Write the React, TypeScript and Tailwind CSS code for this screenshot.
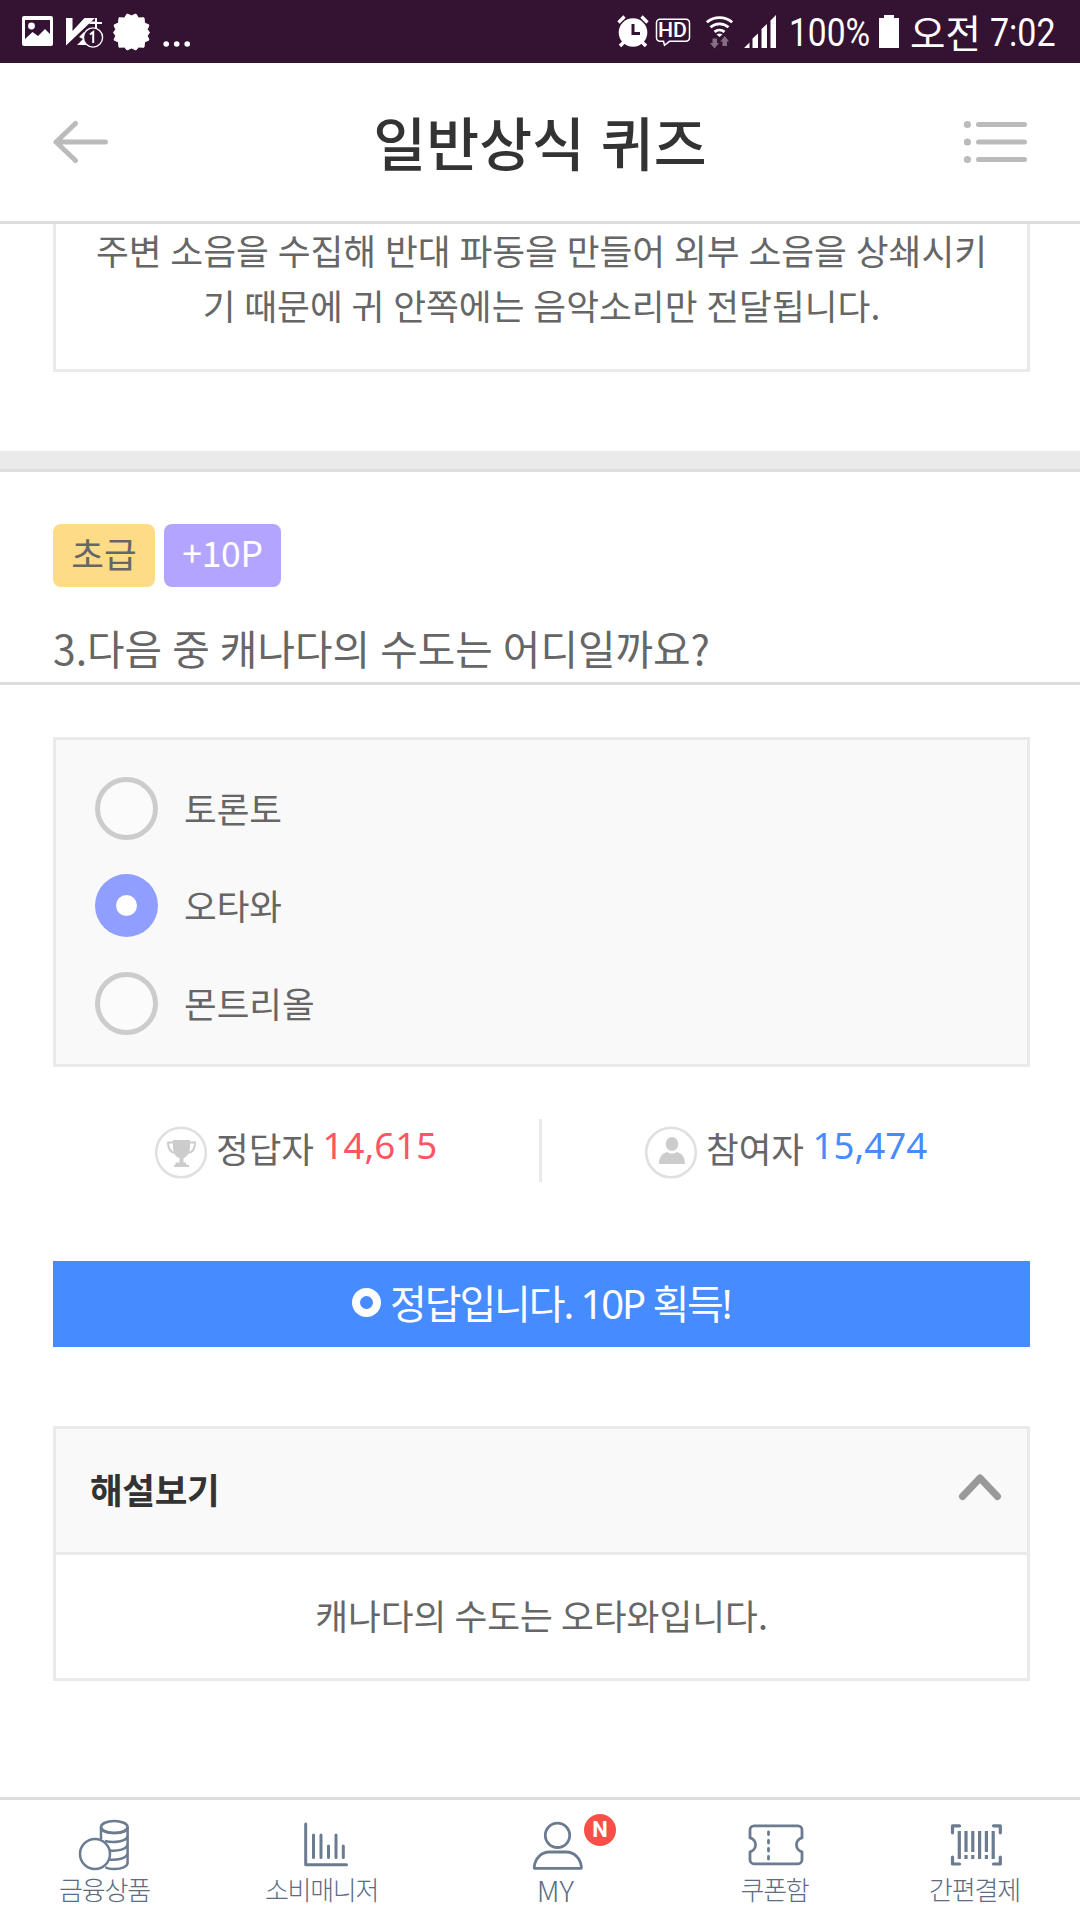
import React from "react";

const KR = "font-['Noto_Sans_CJK_KR',sans-serif]";
const LATIN = "font-['Noto_Sans','Noto_Sans_CJK_KR',sans-serif]";

function StatusBar() {
  return (
    <div className="flex h-[63px] shrink-0 items-start bg-[#341332] text-white">
      <svg className="mt-[13px] ml-[20px] h-[38px] w-[172px]" viewBox="20 13 172 38" fill="none">
        <path
          fill="#fff"
          fillRule="evenodd"
          d="M24 16h27a2 2 0 0 1 2 2v26a2 2 0 0 1-2 2H24a2 2 0 0 1-2-2V18a2 2 0 0 1 2-2Zm1 4v19l7.500-7 5.500 4 7-7 5 5V20Z"
        />
        <circle cx="31.500" cy="26" r="3.400" fill="#fff" />
        <path fill="#fff" d="M66 18h6.500v13L84.500 18H95L66 45.500Z" />
        <path fill="#fff" d="M91 21.500h4V18h2v4h5v2h-5v4h-2v-4h-6Z" />
        <path fill="#fff" d="M77 45l6-6-4-2 5-5 4 13Z" />
        <circle cx="93" cy="37.500" r="9.600" fill="#341332" stroke="#fff" strokeWidth="1.400" />
        <path d="M90 34.500l3.200-2.500v11" stroke="#fff" strokeWidth="2" />
        <path
          fill="#fff"
          stroke="#fff"
          strokeWidth="1"
          strokeLinejoin="round"
          d="M127 14l4.500 1.800 4.500-1.800 2.500 4 5.500-.2.500 5.200 4.500 2-1.700 4.500 2.200 3-2.200 3.300 1.700 4.200-4.500 2-.5 5.200-5.500-.2-2.500 3-4.500-2-4.500 2-2.500-3-5.500.2-.5-5.200-4.500-2 1.700-4.200-2.200-3.300 2.200-3-1.700-4.500 4.500-2 .5-5.200 5.500.2Z"
        />
        <g fill="#fff">
          <circle cx="166.200" cy="44" r="2.800" />
          <circle cx="176.700" cy="44" r="2.800" />
          <circle cx="187.200" cy="44" r="2.800" />
        </g>
      </svg>
      <svg className="mt-[13px] ml-[424px] h-[38px] w-[162px]" viewBox="616 13 162 38" fill="none">
        <circle cx="633" cy="32.500" r="14.300" fill="#fff" />
        <path d="M633 24v9.500h7" stroke="#341332" strokeWidth="3" />
        <path d="M618.500 22.500l6-6M647.500 22.500l-6-6" stroke="#fff" strokeWidth="3.200" />
        <path d="M620 46l5-5M646 46l-5-5" stroke="#fff" strokeWidth="3.500" />
        <path
          d="M660 19.300h26a3.500 3.500 0 0 1 3.500 3.500v15a3.500 3.500 0 0 1-3.500 3.500h-16.500l-5 4-1-4H660a3.500 3.500 0 0 1-3.500-3.500V22.800a3.500 3.500 0 0 1 3.500-3.500Z"
          stroke="#fff"
          strokeWidth="1.500"
        />
        <text
          x="658"
          y="37.200"
          fill="#fff"
          fontFamily="Roboto"
          fontWeight="500"
          fontSize="20.500"
          textLength="29"
          lengthAdjust="spacingAndGlyphs"
        >
          HD
        </text>
        <g stroke="#fff" strokeWidth="2.800">
          <path d="M706.800 22.300a19.500 19.500 0 0 1 25.400 0" />
          <path d="M710.500 27.300a13.500 13.500 0 0 1 18 0" />
          <path d="M714.500 31.800a8 8 0 0 1 10 0" />
        </g>
        <path fill="#fff" d="M716.500 34.500a5 5 0 0 1 6 0l-3 2.500Z" />
        <path fill="#866f85" d="M712.500 38.500h4.500v4.500h2l-4.500 5.500-4.500-5.500h2.500ZM722.500 46h4.500v-4.500h2L724.800 36l-4.500 5.500h2.200Z" />
        <path fill="#fff" d="M744 48l5.500-5.500V48ZM752.500 48V38.500l5.500-5V48ZM761.500 48V29l5.500-5v24ZM770.500 48V20.500l5.500-5.500v33Z" />
      </svg>
      <span className="ml-[11px] w-[90px] origin-left scale-x-[0.850] font-[Roboto] text-[39.500px] leading-[66px] whitespace-nowrap">
        100%
      </span>
      <svg className="mt-[15px] h-[33px] w-5" viewBox="0 0 20 33" fill="#fff">
        <path d="M5 0h10v3h5v30H0V3h5Z" />
      </svg>
      <span className={`ml-[11px] w-[80px] text-[38.500px] leading-[63px] whitespace-nowrap ${KR}`}>오전</span>
      <span className="origin-left scale-x-[0.860] font-[Roboto] text-[39.500px] leading-[66px] whitespace-nowrap">
        7:02
      </span>
    </div>
  );
}

function Header() {
  return (
    <header className="flex h-[161px] shrink-0 items-center justify-between border-b-[3px] border-[#dddddd] bg-white pr-[52px] pl-[53px]">
      <svg className="h-[44px] w-[64px]" viewBox="53 120 64 44" fill="none">
        <path
          d="M105.500 142H56M75.500 123.500L56 142l19.500 18.500"
          stroke="#bbbbbb"
          strokeWidth="5"
          strokeLinecap="round"
          strokeLinejoin="round"
        />
      </svg>
      <h1 className={`mb-[3px] text-[57.500px] leading-[80px] font-medium whitespace-nowrap text-[#333333] [word-spacing:3px] ${KR}`}>
        일반상식 퀴즈
      </h1>
      <svg className="h-[44px] w-[65px]" viewBox="963 120 65 44">
        {[124.500, 142, 159.500].map((y) => (
          <g key={y} fill="#bbbbbb">
            <circle cx="967.400" cy={y} r="3.600" />
            <rect x="976" y={y - 2.500} width="51" height="5" rx="2.500" />
          </g>
        ))}
      </svg>
    </header>
  );
}

function Radio({ checked }: { checked?: boolean }) {
  return checked ? (
    <span className="flex size-[63px] items-center justify-center rounded-full bg-[#8f9eff]">
      <span className="size-[21px] rounded-full bg-white" />
    </span>
  ) : (
    <span className="size-[63px] rounded-full border-[5px] border-[#cccccc] bg-[#fbfbfb]" />
  );
}

function Options() {
  const options = ["토론토", "오타와", "몬트리올"];
  return (
    <div className="mt-[52px] mr-[50px] ml-[53px] flex h-[330px] flex-col gap-[34.400px] border-[3px] border-[#eaeaea] bg-[#f9f9f9] pt-[37px] pl-[39px]">
      {options.map((label, i) => (
        <div key={label} className="flex h-[63px] items-start gap-[26px]">
          <Radio checked={i === 1} />
          <span className="text-[35.500px] leading-[61px]">{label}</span>
        </div>
      ))}
    </div>
  );
}

function Stats() {
  return (
    <div className="mt-[52px] flex h-[63px]">
      <div className="flex w-[539px] pl-[155px]">
        <svg className="mt-[7px] size-[53px]" viewBox="0 0 53 53" fill="none">
          <circle cx="26" cy="26.500" r="24.800" stroke="#e0e0e0" strokeWidth="2.600" />
          <path
            fill="#cccccc"
            d="M18 14h17v6c0 7-3 11-6.500 12v4.500H31V38.500h1.500V39H34v2H19v-2h1.500v-2.500H24.500V32C20.500 31 18 27 18 20Z"
          />
          <path d="M19 16.500h-6c0 6 2 10 7.500 10.500M34 16.500h6c0 6-2 10-7.500 10.500" stroke="#cccccc" strokeWidth="2" />
        </svg>
        <span className="ml-[8px] text-[35.500px] leading-[57px]">정답자</span>
        <span className={`ml-[8.500px] text-[36.700px] leading-[53px] text-[#ff5563] ${LATIN}`}>14,615</span>
      </div>
      <div className="w-[3px] bg-[#eaeaea]" />
      <div className="flex pl-[103px]">
        <svg className="mt-[7px] size-[53px]" viewBox="0 0 53 53" fill="none">
          <circle cx="26" cy="26.500" r="24.800" stroke="#e0e0e0" strokeWidth="2.600" />
          <g fill="#cccccc">
            <ellipse cx="27" cy="18" rx="6.200" ry="7" />
            <path d="M14 38c0-6 2.500-10.500 8-12 3 2 7 2 10 0 5.500 1.500 8 6 8 12Z" />
          </g>
        </svg>
        <span className="ml-[8px] text-[35.500px] leading-[57px]">참여자</span>
        <span className={`ml-[8.500px] text-[36.700px] leading-[53px] text-[#468bff] ${LATIN}`}>15,474</span>
      </div>
    </div>
  );
}

function NavItem({
  width,
  icon,
  label,
  labelClass = "text-[26px] tracking-[-1.200px]",
}: {
  width: string;
  icon: React.ReactNode;
  label: string;
  labelClass?: string;
}) {
  return (
    <div className={`flex flex-col items-center pt-[16px] ${width}`}>
      <div className="h-[58px]">{icon}</div>
      <span className={`mr-[1px] leading-[30px] font-light whitespace-nowrap ${labelClass}`}>{label}</span>
    </div>
  );
}

function BottomNav() {
  return (
    <nav className="flex h-[123px] shrink-0 border-t-[3px] border-[#dddddd] bg-white text-[#5b6d84]">
      <NavItem
        width="w-[210px]"
        label="금융상품"
        icon={
          <svg className="mr-[2px] h-[58px] w-[54px]" viewBox="77 1816 54 58" fill="none" stroke="#6b7b90" strokeWidth="2.500">
            <ellipse cx="114.300" cy="1827" rx="13.300" ry="6" />
            <path d="M101 1827v12M127.600 1827v36c0 3.500-6 6-13.300 6-3.500 0-7-.6-9-1.800" />
            <path d="M101 1828c1 6.500 25.600 7 26.600 0M105 1841c8 2 21.600 1 22.600-5M110 1850.500c8 .8 16.600-1 17.600-6M109 1859.500c8 .8 17.600-1 18.600-6" />
            <circle cx="95" cy="1854" r="15" />
          </svg>
        }
      />
      <NavItem
        width="w-[222px]"
        label="소비매니저"
        labelClass="relative left-[1px] text-[26px] tracking-[-1.300px]"
        icon={
          <svg className="ml-[10px] h-[58px] w-[48px]" viewBox="302 1816 48 58" fill="none" stroke="#6b7b90" strokeWidth="3" strokeLinecap="round" strokeLinejoin="round">
            <path d="M305.700 1824v40.800H346.500" />
            <path d="M313.500 1835v22.500M321 1835v22.500M328.500 1846v11.500M336 1835v22.500M343.300 1846v11.500" />
          </svg>
        }
      />
      <NavItem
        width="w-[248px]"
        label="MY"
        labelClass="text-[29px]"
        icon={
          <div className="relative ml-[4px]">
            <svg className="h-[58px] w-[54px]" viewBox="531 1816 54 58" fill="none" stroke="#6b7b90" strokeWidth="2.800" strokeLinejoin="round">
              <circle cx="557.500" cy="1835.300" r="12.200" />
              <path d="M534.300 1868.300v-2c1-8 7-14.300 15-14.300h17c8 0 14 6.300 15 14.300v2Z" />
            </svg>
            <span className="absolute -top-[2px] left-[53px] flex size-8 items-center justify-center rounded-full bg-[#f85046] font-[Roboto] text-[22px] leading-[32px] font-bold text-white">
              N
            </span>
          </div>
        }
      />
      <NavItem
        width="w-[190px]"
        label="쿠폰함"
        icon={
          <svg className="ml-[2px] h-[58px] w-[58px]" viewBox="747 1816 58 58" fill="none" stroke="#6b7b90" strokeWidth="2.800" strokeLinejoin="round">
            <path d="M754 1825.800h44a4 4 0 0 1 4 4v8a7.200 7.200 0 0 0 0 14v8a4 4 0 0 1-4 4h-44a4 4 0 0 1-4-4v-8a7.200 7.200 0 0 0 0-14v-8a4 4 0 0 1 4-4Z" />
            <path d="M768.500 1832v2.500M768.500 1840.500v2.500M768.500 1848.500v2.500M768.500 1856.500v2.500" strokeLinecap="round" />
          </svg>
        }
      />
      <NavItem
        width="w-[210px]"
        label="간편결제"
        icon={
          <svg className="ml-[2px] h-[58px] w-[54px]" viewBox="949 1816 54 58" fill="none" stroke="#6b7b90" strokeWidth="3.200">
            <g strokeLinecap="round" strokeLinejoin="round">
              <path d="M959.500 1825.800h-7v7M993.500 1825.800h6.800v7M959.500 1864h-7v-7M993.500 1864h6.800v-7" />
            </g>
            <path d="M959.300 1831v28M966 1831v21M966 1855v4M972.800 1831v21M972.800 1855v4M979.600 1831v28M986.400 1831v21M986.400 1855v4M993.200 1831v28" />
          </svg>
        }
      />
    </nav>
  );
}

export default function App() {
  return (
    <div className={`flex h-[1920px] w-[1080px] flex-col overflow-hidden bg-white text-[#666666] ${KR}`}>
      <StatusBar />
      <Header />
      <main className="flex min-h-0 flex-1 flex-col overflow-hidden">
        <div className="mr-[50px] ml-[53px] h-[148px] shrink-0 border-x-[3px] border-b-[3px] border-[#eaeaea] text-center text-[35.700px] leading-[55px] [word-spacing:0.800px]">
          <p className="-mt-[2px]">
            주변 소음을 수집해 반대 파동을 만들어 외부 소음을 상쇄시키
            <br />기 때문에 귀 안쪽에는 음악소리만 전달됩니다.
          </p>
        </div>
        <div className="mt-[79px] h-[21px] shrink-0 border-b-[3px] border-[#dddddd] bg-[#eaeaea]" />
        <section className="h-[213px] shrink-0 border-b-[3px] border-[#dddddd] pt-[52px] pl-[53px]">
          <div className="flex gap-[9px] text-[35.500px] leading-[57px]">
            <span className="h-[63px] w-[102px] rounded-[8px] bg-[#fedb87] text-center">초급</span>
            <span className="h-[63px] w-[117px] rounded-[8px] bg-[#b3a5ff] text-center leading-[55px] tracking-[-0.300px] text-white">
              +10P
            </span>
          </div>
          <h2 className="mt-[28px] text-[40.800px] leading-[66px] whitespace-nowrap [word-spacing:1px]">
            3.다음 중 캐나다의 수도는 어디일까요?
          </h2>
        </section>
        <Options />
        <Stats />
        <div className="mt-[79px] mr-[50px] ml-[53px] flex h-[86px] shrink-0 items-center bg-[#468bff] pl-[299px] text-white">
          <span className="mb-[4px] size-[29px] rounded-full border-[8px] border-white" />
          <span className={`ml-[9px] text-[40px] leading-[86px] tracking-[-2.100px] whitespace-nowrap ${LATIN}`}>
            정답입니다. 10P 획득!
          </span>
        </div>
        <section className="mt-[79px] mr-[50px] ml-[53px] h-[255px] shrink-0 border-[3px] border-[#eaeaea] text-[35.700px]">
          <div className="flex h-[126px] items-center justify-between border-b-[3px] border-[#eaeaea] bg-[#f9f9f9] pr-[24px] pb-[4px] pl-[34px]">
            <h3 className="text-[35.500px] font-bold tracking-[-0.300px] text-[#333333]">해설보기</h3>
            <svg className="mb-[3px] h-[28px] w-[46px]" viewBox="957 1473 46 28" fill="none">
              <path d="M962.500 1496.500L980 1478l17.500 18.500" stroke="#999999" strokeWidth="7" strokeLinecap="round" strokeLinejoin="round" />
            </svg>
          </div>
          <p className="text-center leading-[119px]">캐나다의 수도는 오타와입니다.</p>
        </section>
      </main>
      <BottomNav />
    </div>
  );
}
